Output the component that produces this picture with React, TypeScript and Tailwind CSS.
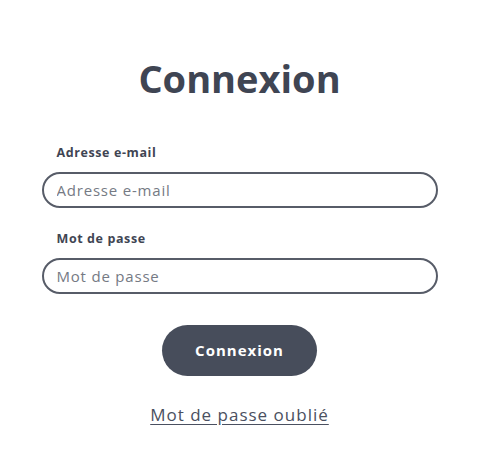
export default function App() {
  return (
    <div className="min-h-screen bg-white font-['Open_Sans',sans-serif]">
      <div className="w-[479px] flex flex-col items-center pt-[54px]">
        <h1 className="text-[38px] font-bold leading-[48px] text-[#3f4553]">Connexion</h1>

        <form className="w-[396px] mt-[43px] flex flex-col" onSubmit={(e) => e.preventDefault()}>
          <label htmlFor="email" className="pl-[15px] text-[12.5px] font-bold tracking-[0.6px] text-[#3f4553] leading-[16px]">
            Adresse e-mail
          </label>
          <input
            id="email"
            type="email"
            placeholder="Adresse e-mail"
            className="mt-[11px] h-[36px] w-full rounded-full border-2 border-[#575c68] px-[13px] text-[15px] tracking-[0.8px] text-[#3f4553] placeholder:text-[#757a84] outline-none"
          />

          <label htmlFor="password" className="mt-[23px] pl-[15px] text-[12.5px] font-bold tracking-[0.6px] text-[#3f4553] leading-[16px]">
            Mot de passe
          </label>
          <input
            id="password"
            type="password"
            placeholder="Mot de passe"
            className="mt-[11px] h-[36px] w-full rounded-full border-2 border-[#575c68] px-[13px] text-[15px] tracking-[0.8px] text-[#3f4553] placeholder:text-[#757a84] outline-none"
          />

          <button
            type="submit"
            className="mt-[31px] self-center w-[155px] h-[51px] rounded-full bg-[#474d5b] text-white text-[15px] font-bold tracking-[1px]"
          >
            Connexion
          </button>
        </form>

        <a href="#" className="mt-[26px] text-[17px] tracking-[1px] text-[#4a5060] underline underline-offset-[3px]">
          Mot de passe oublié
        </a>
      </div>
    </div>
  );
}
